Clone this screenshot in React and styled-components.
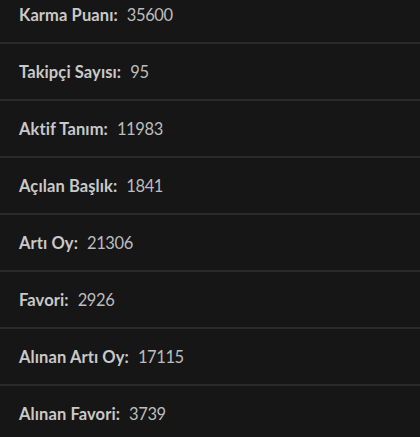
import React from 'react';
import styled, { createGlobalStyle } from 'styled-components';

const GlobalStyle = createGlobalStyle`
  html, body {
    margin: 0;
    padding: 0;
    background: #161616;
    overflow: hidden;
  }
`;

const List = styled.div`
  display: flex;
  flex-direction: column;
  margin-top: -13px;
  font-family: Lato, "Open Sans", "Liberation Sans", sans-serif;
`;

const Row = styled.div`
  display: flex;
  align-items: center;
  height: 55px;
  padding: 0 19px;
  border-bottom: 2px solid #2a2a2a;
`;

const Stat = styled.div`
  display: flex;
  align-items: baseline;
  font-size: 16.5px;
`;

const Label = styled.span`
  font-weight: 700;
  color: #c9c9c9;
  margin-right: 9px;
  letter-spacing: 0.1px;
`;

const Value = styled.span`
  font-weight: 400;
  color: #bdbdbd;
  letter-spacing: -0.4px;
`;

const stats = [
  ['Karma Puanı', '35600'],
  ['Takipçi Sayısı', '95'],
  ['Aktif Tanım', '11983'],
  ['Açılan Başlık', '1841'],
  ['Artı Oy', '21306'],
  ['Favori', '2926'],
  ['Alınan Artı Oy', '17115'],
  ['Alınan Favori', '3739'],
];

export default function App() {
  return (
    <>
      <GlobalStyle />
      <List>
        {stats.map(([label, value]) => (
          <Row key={label}>
            <Stat>
              <Label>{label}:</Label>
              <Value>{value}</Value>
            </Stat>
          </Row>
        ))}
      </List>
    </>
  );
}
